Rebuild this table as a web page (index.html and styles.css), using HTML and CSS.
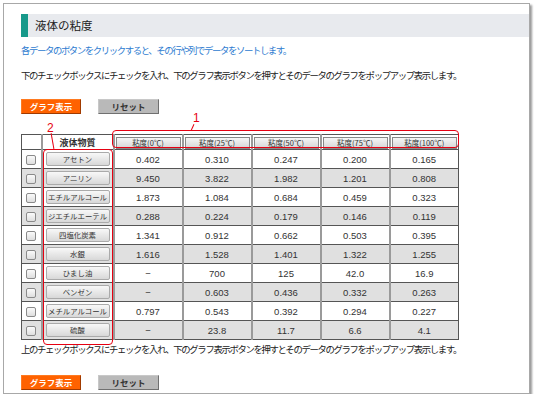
FILE: index.html
```html
<!DOCTYPE html>
<html lang="ja">
<head>
<meta charset="utf-8">
<link rel="stylesheet" href="styles.css">
</head>
<body>
<div class="frame">
  <h1 class="title">液体の粘度</h1>
  <p class="lead blue">各データのボタンをクリックすると、その行や列でデータをソートします。</p>
  <p class="lead">下のチェックボックスにチェックを入れ、下のグラフ表示ボタンを押すとそのデータのグラフをポップアップ表示します。</p>
  <div class="actions top">
    <button class="btn-graph">グラフ表示</button>
    <button class="btn-reset">リセット</button>
  </div>
  <div class="table-wrap">
    <table class="data">
      <colgroup>
        <col class="c-check"><col class="c-name"><col class="c-val"><col class="c-val"><col class="c-val"><col class="c-val"><col class="c-val">
      </colgroup>
      <thead>
        <tr>
          <th></th>
          <th class="name-head">液体物質</th>
          <th><span class="hbtn">粘度(0℃)</span></th>
          <th><span class="hbtn">粘度(25℃)</span></th>
          <th><span class="hbtn">粘度(50℃)</span></th>
          <th><span class="hbtn">粘度(75℃)</span></th>
          <th><span class="hbtn">粘度(100℃)</span></th>
        </tr>
      </thead>
      <tbody>
        <tr><td><span class="cb"></span></td><td><span class="nbtn">アセトン</span></td><td>0.402</td><td>0.310</td><td>0.247</td><td>0.200</td><td>0.165</td></tr>
        <tr class="alt"><td><span class="cb"></span></td><td><span class="nbtn">アニリン</span></td><td>9.450</td><td>3.822</td><td>1.982</td><td>1.201</td><td>0.808</td></tr>
        <tr><td><span class="cb"></span></td><td><span class="nbtn">エチルアルコール</span></td><td>1.873</td><td>1.084</td><td>0.684</td><td>0.459</td><td>0.323</td></tr>
        <tr class="alt"><td><span class="cb"></span></td><td><span class="nbtn">ジエチルエーテル</span></td><td>0.288</td><td>0.224</td><td>0.179</td><td>0.146</td><td>0.119</td></tr>
        <tr><td><span class="cb"></span></td><td><span class="nbtn">四塩化炭素</span></td><td>1.341</td><td>0.912</td><td>0.662</td><td>0.503</td><td>0.395</td></tr>
        <tr class="alt"><td><span class="cb"></span></td><td><span class="nbtn">水銀</span></td><td>1.616</td><td>1.528</td><td>1.401</td><td>1.322</td><td>1.255</td></tr>
        <tr><td><span class="cb"></span></td><td><span class="nbtn">ひまし油</span></td><td>−</td><td>700</td><td>125</td><td>42.0</td><td>16.9</td></tr>
        <tr class="alt"><td><span class="cb"></span></td><td><span class="nbtn">ベンゼン</span></td><td>−</td><td>0.603</td><td>0.436</td><td>0.332</td><td>0.263</td></tr>
        <tr><td><span class="cb"></span></td><td><span class="nbtn">メチルアルコール</span></td><td>0.797</td><td>0.543</td><td>0.392</td><td>0.294</td><td>0.227</td></tr>
        <tr class="alt"><td><span class="cb"></span></td><td><span class="nbtn">硫酸</span></td><td>−</td><td>23.8</td><td>11.7</td><td>6.6</td><td>4.1</td></tr>
      </tbody>
    </table>
    <div class="mark mark1"></div>
    <div class="mark mark2"></div>
    <span class="note note1">1</span>
    <span class="note note2">2</span>
    <span class="tick tick1"></span>
    <span class="tick tick2"></span>
  </div>
  <p class="lead after">上のチェックボックスにチェックを入れ、下のグラフ表示ボタンを押すとそのデータのグラフをポップアップ表示します。</p>
  <div class="actions bottom">
    <button class="btn-graph">グラフ表示</button>
    <button class="btn-reset">リセット</button>
  </div>
</div>
</body>
</html>
```

FILE: styles.css
```css
* { box-sizing: border-box; }
html, body { margin: 0; padding: 0; background: #fff; }
body {
  font-family: "Noto Sans CJK JP", "Liberation Sans", sans-serif;
  color: #222;
}
.frame {
  margin: 3px 0 0 3px;
  width: 527px;
  height: 391px;
  border: 1px solid #a8a8a8;
  box-shadow: 2px 2px 2px #9a9a9a;
  padding: 10px 0 0 17px;
  background: #fff;
  overflow: hidden;
}
.title {
  margin: 0;
  height: 23px;
  background: #e8eaee;
  border-left: 7px solid #17998a;
  font-size: 11.5px;
  font-weight: normal;
  line-height: 23px;
  padding-left: 7px;
  color: #222;
}
.lead {
  margin: 0;
  font-size: 9.4px;
  line-height: 14px;
  letter-spacing: -1.35px;
  white-space: nowrap;
}
.blue { color: #2e7bd0; margin-top: 6px; letter-spacing: -1.4px; }
.blue + .lead { margin-top: 11px; }
.actions { display: flex; gap: 17px; }
.actions.top { margin-top: 17px; }
.actions.bottom { margin-top: 19px; }
.btn-graph, .btn-reset {
  height: 15px;
  padding: 0;
  font-family: "Noto Sans CJK JP", sans-serif;
  font-size: 8.5px;
  font-weight: bold;
  line-height: 13px;
  cursor: pointer;
}
.btn-graph {
  width: 60px;
  background: #ff6200;
  color: #fff;
  border: 1px solid #ff7a20;
  border-right-color: #a03a00;
  border-bottom-color: #a03a00;
}
.btn-reset {
  width: 61px;
  background: #b9b9b9;
  color: #333;
  border: 1px solid #c8c8c8;
  border-right-color: #707070;
  border-bottom-color: #707070;
}
.table-wrap {
  position: relative;
  margin-top: 20px;
  width: 437px;
}
.data {
  border-collapse: collapse;
  table-layout: fixed;
  width: 437px;
  font-family: "Liberation Sans", Arial, sans-serif;
  font-size: 9.5px;
  color: #333;
}
.c-check { width: 20px; }
.c-name { width: 72px; }
.c-val { width: 69px; }
.data th, .data td {
  border-top: 1px solid #555;
  border-bottom: 1px solid #555;
  border-left: 2px solid #9a9a9a;
  border-right: 2px solid #9a9a9a;
  padding: 0;
  text-align: center;
  vertical-align: middle;
}
.data tr > :first-child { border-left: 1px solid #555; }
.data tr > :last-child { border-right: 1px solid #555; }
.data thead tr { height: 14px; }
.data tbody tr { height: 19px; }
.data tr.alt { background: #e0e0e0; }
.data th { font-weight: normal; padding: 1px 1px 0; }
.name-head {
  font-family: "Noto Sans CJK JP", sans-serif;
  font-weight: bold !important;
  font-size: 9px;
}
.hbtn {
  display: block;
  height: 12px;
  line-height: 10px;
  border: 1px solid #888;
  background: linear-gradient(#f6f6f6, #d6d6d6);
  font-family: "Noto Sans CJK JP", sans-serif;
  font-size: 7.5px;
  color: #333;
}
.nbtn {
  display: block;
  margin: 0 3px;
  height: 14px;
  line-height: 12px;
  border: 1px solid #aaa;
  border-radius: 2px;
  background: linear-gradient(#f8f8f8, #d8d8d8);
  font-family: "Noto Sans CJK JP", sans-serif;
  font-size: 7.4px;
  color: #333;
  white-space: nowrap;
}
.cb {
  display: inline-block;
  width: 10px;
  height: 10px;
  border: 1px solid #8a8a8a;
  border-radius: 2px;
  background: linear-gradient(#fafafa, #dedede);
  vertical-align: middle;
}
.mark {
  position: absolute;
  border: 1px solid #e60012;
  border-radius: 4px;
}
.mark1 { left: 91px; top: -4px; width: 347px; height: 18px; }
.mark2 { left: 22px; top: 15px; width: 70px; height: 196px; }
.note {
  position: absolute;
  color: #e60012;
  font-family: "Liberation Sans", Arial, sans-serif;
  font-size: 12px;
  line-height: 12px;
}
.note1 { left: 172px; top: -22px; }
.note2 { left: 26px; top: -12px; }
.tick {
  position: absolute;
  width: 1px;
  background: #e60012;
}
.tick1 { left: 171px; top: -10px; height: 7px; transform: rotate(25deg); }
.tick2 { left: 31px; top: -1px; height: 16px; transform: rotate(-10deg); }
.after { margin-top: 2px; }
```
